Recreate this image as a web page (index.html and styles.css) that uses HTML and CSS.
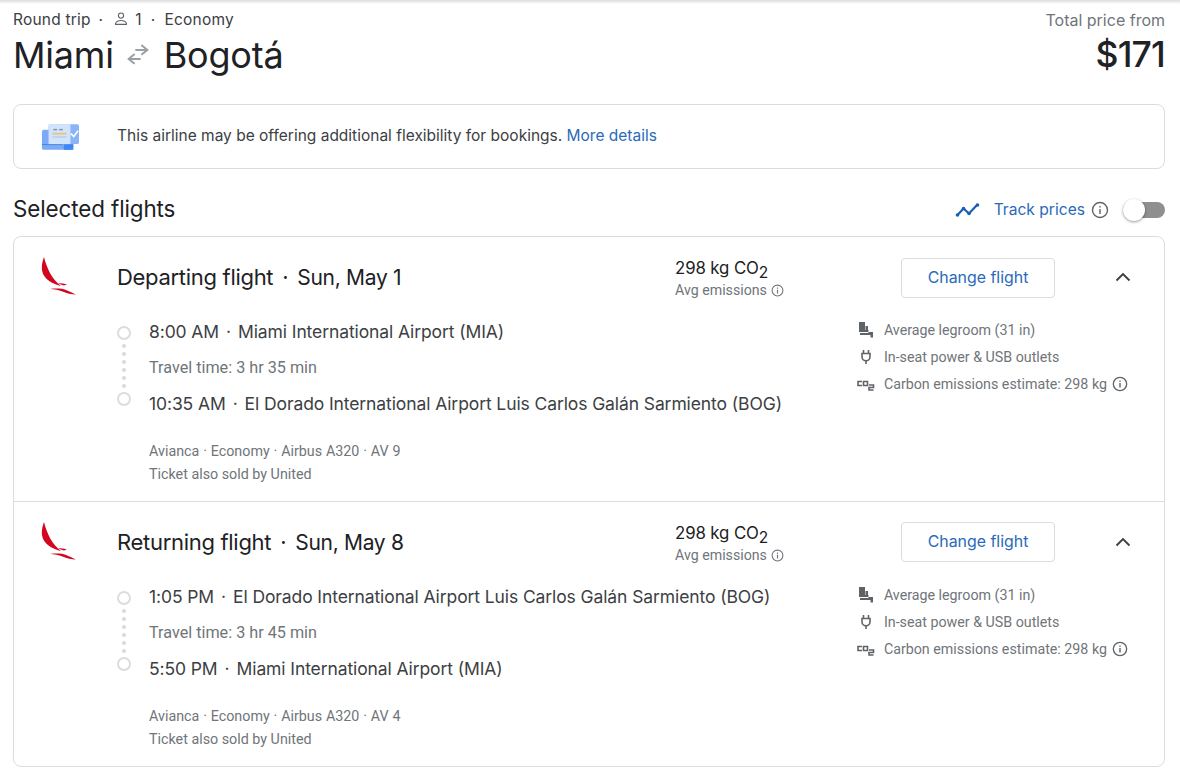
FILE: index.html
```html
<!DOCTYPE html>
<html lang="en">
<head>
<meta charset="utf-8">
<title>Miami to Bogotá</title>
<link rel="stylesheet" href="styles.css">
</head>
<body>
<div class="topshade"></div>
<main class="page">
  <header class="head">
    <div>
      <div class="meta">
        <span>Round trip</span><span class="dot">·</span>
        <svg class="person" width="16" height="16" viewBox="0 0 16 16"><circle cx="8" cy="4.6" r="2.6" fill="none" stroke="#5f6368" stroke-width="1.1"/><path d="M2.6 13.4v-1c0-1.9 3.4-2.9 5.4-2.9s5.4 1 5.4 2.9v1z" fill="none" stroke="#5f6368" stroke-width="1.1"/></svg>
        <span>1</span><span class="dot dot-b">·</span><span>Economy</span>
      </div>
      <h1 class="route">
        <span>Miami</span>
        <svg class="swap" width="24" height="24" viewBox="3 3 18 18"><path d="M14.5 4.5 19 8.2l-4.500 3.600M19 8.200h-9M9.500 11.200 5 15l4.500 3.600M5 15h9" fill="none" stroke="#9aa0a6" stroke-width="1.500"/></svg>
        <span>Bogotá</span>
      </h1>
    </div>
    <div class="price">
      <div class="price-label">Total price from</div>
      <div class="price-value">$171</div>
    </div>
  </header>

  <section class="notice">
    <svg class="notice-icon" width="38" height="29" viewBox="0 0 40 30">
      <rect x="1" y="8" width="33" height="21" rx="2" fill="#7baaf7"/>
      <rect x="24" y="23" width="10" height="6" fill="#4285f4"/>
      <rect x="1" y="23" width="22" height="1" fill="#4a80d8"/>
      <rect x="8" y="2" width="32" height="21" rx="2" fill="#8ab4f8"/>
      <rect x="8" y="2" width="23" height="21" fill="#d2e3fc"/>
      <rect x="13" y="7" width="4" height="1.5" fill="#7f93b5"/><rect x="19" y="7" width="4" height="1.5" fill="#7f93b5"/>
      <rect x="12" y="11" width="15" height="2" fill="#e8c678"/>
      <rect x="12" y="15" width="15" height="1" fill="#a8c0e4"/>
      <path d="m31.5 12 3 3 4.5-6" fill="none" stroke="#fff" stroke-width="1.7"/>
    </svg>
    <p class="notice-text">This airline may be offering additional flexibility for bookings. <a class="link">More details</a></p>
  </section>

  <div class="section-head">
    <h2 class="section-title">Selected flights</h2>
    <div class="track">
      <svg width="26" height="16" viewBox="0 0 26 16"><path d="M2.5 13 8.500 6.500l5.500 5 8.500-9" fill="none" stroke="#1a5fb4" stroke-width="2.200"/><circle cx="2.500" cy="13" r="1.800" fill="#1a5fb4"/><circle cx="8.500" cy="6.500" r="1.800" fill="#1a5fb4"/><circle cx="14" cy="11.500" r="1.800" fill="#1a5fb4"/><circle cx="22.500" cy="3" r="1.800" fill="#1a5fb4"/></svg>
      <span class="track-label">Track prices</span>
      <svg class="info" width="18" height="18" viewBox="0 0 18 18"><circle cx="9" cy="9" r="7.500" fill="none" stroke="#5f6368" stroke-width="1.400"/><path d="M8.300 8h1.400v5H8.300zM8.300 5h1.400v1.500H8.300z" fill="#5f6368"/></svg>
      <span class="toggle"><span class="knob"></span></span>
    </div>
  </div>

  <section class="card">
    <article class="flight">
      <svg class="logo" width="36" height="40" viewBox="0 0 36 40"><path d="M3 1C0 9 0 16 4 21c3 4 8 7 16 9C11 23 6 13 3 1z" fill="#d4051e"/><path d="M17 27c3 .2 6 .6 9 1.200l-3 1.400c-2.200-.7-4.200-1.500-6-2.600z" fill="#d4051e"/><path d="M9 33c7-.8 12-.4 16 1 3 1 6 3 10 4.500-4.500 0-9-1-13.500-3-4-1.800-8-2.200-12.500-2.500z" fill="#d4051e"/></svg>
      <div class="flight-main">
        <div class="flight-head">
          <h3 class="flight-title">Departing flight<span class="sep">·</span><span class="date">Sun, May 1</span></h3>
          <div class="emissions">
            <div class="co2">298 kg CO<sub>2</sub></div>
            <div class="avg">Avg emissions <svg width="13" height="13" viewBox="0 0 18 18"><circle cx="9" cy="9" r="7.500" fill="none" stroke="#70757a" stroke-width="1.500"/><path d="M8.200 8h1.600v5H8.200zM8.200 5h1.600v1.500H8.200z" fill="#70757a"/></svg></div>
          </div>
          <button class="change">Change flight</button>
          <svg class="chevron" width="24" height="24" viewBox="0 0 24 24"><path d="m5.500 15.500 6.500-6.500 6.500 6.500" fill="none" stroke="#3c4043" stroke-width="1.900"/></svg>
        </div>
        <div class="flight-body">
          <div class="itinerary">
            <div class="stops">
              <div class="timeline"><span class="ring"></span><span class="dots"></span><span class="ring"></span></div>
              <div class="stop-text">
                <div class="stop">8:00 AM<span class="sep-s">·</span>Miami International Airport (MIA)</div>
                <div class="duration">Travel time: 3 hr 35 min</div>
                <div class="stop">10:35 AM<span class="sep-s">·</span>El Dorado International Airport Luis Carlos Galán Sarmiento (BOG)</div>
              </div>
            </div>
            <div class="details">
              <div class="legs">Avianca · Economy · Airbus A320 · AV 9</div>
              <div>Ticket also sold by United</div>
            </div>
          </div>
          <ul class="amenities">
            <li><svg class="am-icon" width="18" height="18" viewBox="0 0 18 18"><path d="M2 1h6v8h3.500v2H2zM8.500 5H11v4H8.500zM3 12h8.500v-1H16v5.500h-2.500V14H3z" fill="#5f6368"/></svg>Average legroom (31 in)</li>
            <li><svg class="am-icon" width="18" height="18" viewBox="0 0 18 18"><path d="M6.500 2v3.500M11.500 2v3.500M5 5.500h8v3.500c0 2.200-1.800 3.800-4 3.800S5 11.200 5 9zM9 13v3" fill="none" stroke="#5f6368" stroke-width="1.600"/></svg>In-seat power &amp; USB outlets</li>
            <li><svg class="am-icon" width="18" height="18" viewBox="0 0 18 18"><g fill="none" stroke="#5f6368" stroke-width="1.600"><path d="M5 6.500H1v4h4M6.500 6.500H10.500v4H6.500z"/><path d="M12 10h4.500v2.500H12V15h4.500"/></g></svg>Carbon emissions estimate: 298 kg <svg class="info-s" width="16" height="16" viewBox="0 0 18 18"><circle cx="9" cy="9" r="7.500" fill="none" stroke="#5f6368" stroke-width="1.500"/><path d="M8.200 8h1.600v5H8.200zM8.200 5h1.600v1.500H8.200z" fill="#5f6368"/></svg></li>
          </ul>
        </div>
      </div>
    </article>

    <article class="flight">
      <svg class="logo" width="36" height="40" viewBox="0 0 36 40"><path d="M3 1C0 9 0 16 4 21c3 4 8 7 16 9C11 23 6 13 3 1z" fill="#d4051e"/><path d="M17 27c3 .2 6 .6 9 1.200l-3 1.400c-2.200-.7-4.200-1.500-6-2.600z" fill="#d4051e"/><path d="M9 33c7-.8 12-.4 16 1 3 1 6 3 10 4.500-4.500 0-9-1-13.500-3-4-1.800-8-2.200-12.500-2.500z" fill="#d4051e"/></svg>
      <div class="flight-main">
        <div class="flight-head">
          <h3 class="flight-title">Returning flight<span class="sep">·</span><span class="date">Sun, May 8</span></h3>
          <div class="emissions">
            <div class="co2">298 kg CO<sub>2</sub></div>
            <div class="avg">Avg emissions <svg width="13" height="13" viewBox="0 0 18 18"><circle cx="9" cy="9" r="7.500" fill="none" stroke="#70757a" stroke-width="1.500"/><path d="M8.200 8h1.600v5H8.200zM8.200 5h1.600v1.500H8.200z" fill="#70757a"/></svg></div>
          </div>
          <button class="change">Change flight</button>
          <svg class="chevron" width="24" height="24" viewBox="0 0 24 24"><path d="m5.500 15.500 6.500-6.500 6.500 6.500" fill="none" stroke="#3c4043" stroke-width="1.900"/></svg>
        </div>
        <div class="flight-body">
          <div class="itinerary">
            <div class="stops">
              <div class="timeline"><span class="ring"></span><span class="dots"></span><span class="ring"></span></div>
              <div class="stop-text">
                <div class="stop">1:05 PM<span class="sep-s">·</span>El Dorado International Airport Luis Carlos Galán Sarmiento (BOG)</div>
                <div class="duration">Travel time: 3 hr 45 min</div>
                <div class="stop">5:50 PM<span class="sep-s">·</span>Miami International Airport (MIA)</div>
              </div>
            </div>
            <div class="details">
              <div class="legs">Avianca · Economy · Airbus A320 · AV 4</div>
              <div>Ticket also sold by United</div>
            </div>
          </div>
          <ul class="amenities">
            <li><svg class="am-icon" width="18" height="18" viewBox="0 0 18 18"><path d="M2 1h6v8h3.500v2H2zM8.500 5H11v4H8.500zM3 12h8.500v-1H16v5.500h-2.500V14H3z" fill="#5f6368"/></svg>Average legroom (31 in)</li>
            <li><svg class="am-icon" width="18" height="18" viewBox="0 0 18 18"><path d="M6.500 2v3.500M11.500 2v3.500M5 5.500h8v3.500c0 2.200-1.800 3.800-4 3.800S5 11.200 5 9zM9 13v3" fill="none" stroke="#5f6368" stroke-width="1.600"/></svg>In-seat power &amp; USB outlets</li>
            <li><svg class="am-icon" width="18" height="18" viewBox="0 0 18 18"><g fill="none" stroke="#5f6368" stroke-width="1.600"><path d="M5 6.500H1v4h4M6.500 6.500H10.500v4H6.500z"/><path d="M12 10h4.500v2.500H12V15h4.500"/></g></svg>Carbon emissions estimate: 298 kg <svg class="info-s" width="16" height="16" viewBox="0 0 18 18"><circle cx="9" cy="9" r="7.500" fill="none" stroke="#5f6368" stroke-width="1.500"/><path d="M8.200 8h1.600v5H8.200zM8.200 5h1.600v1.500H8.200z" fill="#5f6368"/></svg></li>
          </ul>
        </div>
      </div>
    </article>
  </section>
</main>
</body>
</html>
```
FILE: styles.css
```css
* { box-sizing: border-box; }
html, body { margin: 0; padding: 0; background: #fff; }
body { width: 1180px; height: 778px; overflow: hidden; font-family: Roboto, "Liberation Sans", sans-serif; color: #202124; position: relative; }
.topshade { height: 4px; margin-bottom: -4px; background: linear-gradient(#dcdcdc, #fff); }
.page { padding: 10px 15px 0 13px; }
.head { display: flex; justify-content: space-between; height: 94px; }
.meta { display: flex; align-items: center; height: 20px; margin-top: -1px; font-family: Inter, sans-serif; font-size: 15.500px; letter-spacing: 0.2px; color: #3c4043; }
.dot { margin: 0 10px 0 8px; }
.dot-b { margin: 0 9px 0 9px; }
.person { margin-right: 6px; }
.route { display: flex; align-items: center; margin: 6px 0 0; font-family: Inter, sans-serif; font-weight: 400; font-size: 36px; line-height: 40px; letter-spacing: -0.2px; }
.swap { margin: 0 14px 0 12px; }
.price { text-align: right; }
.price-label { height: 20px; font-family: Inter, sans-serif; font-size: 16px; line-height: 20px; color: #70757a; }
.price-value { margin-top: 5px; font-family: Inter, sans-serif; font-weight: 500; font-size: 35.500px; line-height: 40px; letter-spacing: -0.8px; }
.notice { display: flex; align-items: center; height: 65px; border: 1px solid #dadce0; border-radius: 8px; }
.notice-icon { margin-left: 27px; margin-right: 38px; }
.notice-text { margin: 0 0 2px; font-family: Inter, sans-serif; font-size: 15.500px; color: #3c4043; }
.link { color: #2a6ab8; }
.section-head { display: flex; justify-content: space-between; align-items: center; height: 67px; }
.section-title { margin: 12px 0 0; font-family: Inter, sans-serif; font-size: 22.400px; font-weight: 400; letter-spacing: -0.1px; }
.track { display: flex; align-items: center; margin-top: 14px; color: #2a6ab8; }
.track-label { margin-left: 13px; font-family: Inter, sans-serif; font-size: 15.600px; }
.info { margin-left: 6px; }
.toggle { position: relative; width: 42px; height: 16px; margin-left: 14px; border-radius: 8px; background: #8f8f8f; }
.knob { position: absolute; left: 0; top: -3px; width: 22px; height: 22px; border-radius: 50%; background: #fff; box-shadow: 0 1px 3px rgba(0,0,0,.4); }
.card { border: 1px solid #dadce0; border-radius: 8px; height: 531px; }
.flight { display: flex; height: 265px; padding-top: 19px; border-bottom: 1px solid #dadce0; }
.flight:last-child { border-bottom: 0; height: 264px; }
.logo { flex: none; margin: 0 0 0 27px; }
.flight-main { flex: 1; margin-left: 40px; }
.flight-head { display: flex; align-items: flex-start; height: 61px; }
.flight-title { width: 558px; margin: 8px 0 0; font-family: Inter, sans-serif; font-size: 22px; line-height: 26px; font-weight: 400; letter-spacing: -0.3px; }
.date { font-size: 21px; }
.sep { margin: 0 9px; }
.emissions { width: 226px; }
.co2 { font-family: Inter, sans-serif; font-size: 16.800px; line-height: 20px; margin-top: 2px; height: 23px; letter-spacing: -0.1px; }
.co2 sub { font-size: 15.500px; line-height: 0; }
.avg { display: flex; align-items: center; gap: 4px; font-size: 14.200px; line-height: 18px; color: #70757a; }
.change { width: 154px; height: 40px; margin-top: 2px; border: 1px solid #dadce0; border-radius: 4px; background: #fff; font-family: Inter, sans-serif; font-size: 15.900px; color: #2a6ab8; padding: 0 0 2px; }
.flight:last-child .change { margin-top: 1px; }
.chevron { margin: 9px 0 0 56px; }
.flight-body { display: flex; justify-content: space-between; }
.stops { display: flex; }
.timeline { display: flex; flex-direction: column; align-items: center; width: 14px; margin-top: 9px; }
.ring { flex: none; width: 14px; height: 14px; border: 2px solid #dadce0; border-radius: 50%; }
.dots { flex: none; height: 48px; width: 4px; margin: 2px 0; background: radial-gradient(circle, #dadce0 1.900px, transparent 2.200px) 0 0 / 4px 8px repeat-y; }
.stop-text { margin-left: 18px; }
.stop { height: 30px; font-family: Inter, sans-serif; font-size: 17.500px; line-height: 30px; color: #3c4043; letter-spacing: -0.1px; white-space: nowrap; }
.sep-s { margin: 0 7px; }
.duration { height: 42px; font-size: 16.200px; line-height: 42px; color: #70757a; }
.details { margin: 21px 0 0 32px; font-size: 14.300px; line-height: 23px; color: #70757a; }
.legs { word-spacing: 0.300px; }
.amenities { list-style: none; margin: -1px 36px 0 0; padding: 0; font-size: 14.250px; color: #70757a; }
.amenities li { display: flex; align-items: center; height: 27px; white-space: nowrap; }
.am-icon { margin-right: 9px; }
.info-s { margin-left: 5px; }
```
